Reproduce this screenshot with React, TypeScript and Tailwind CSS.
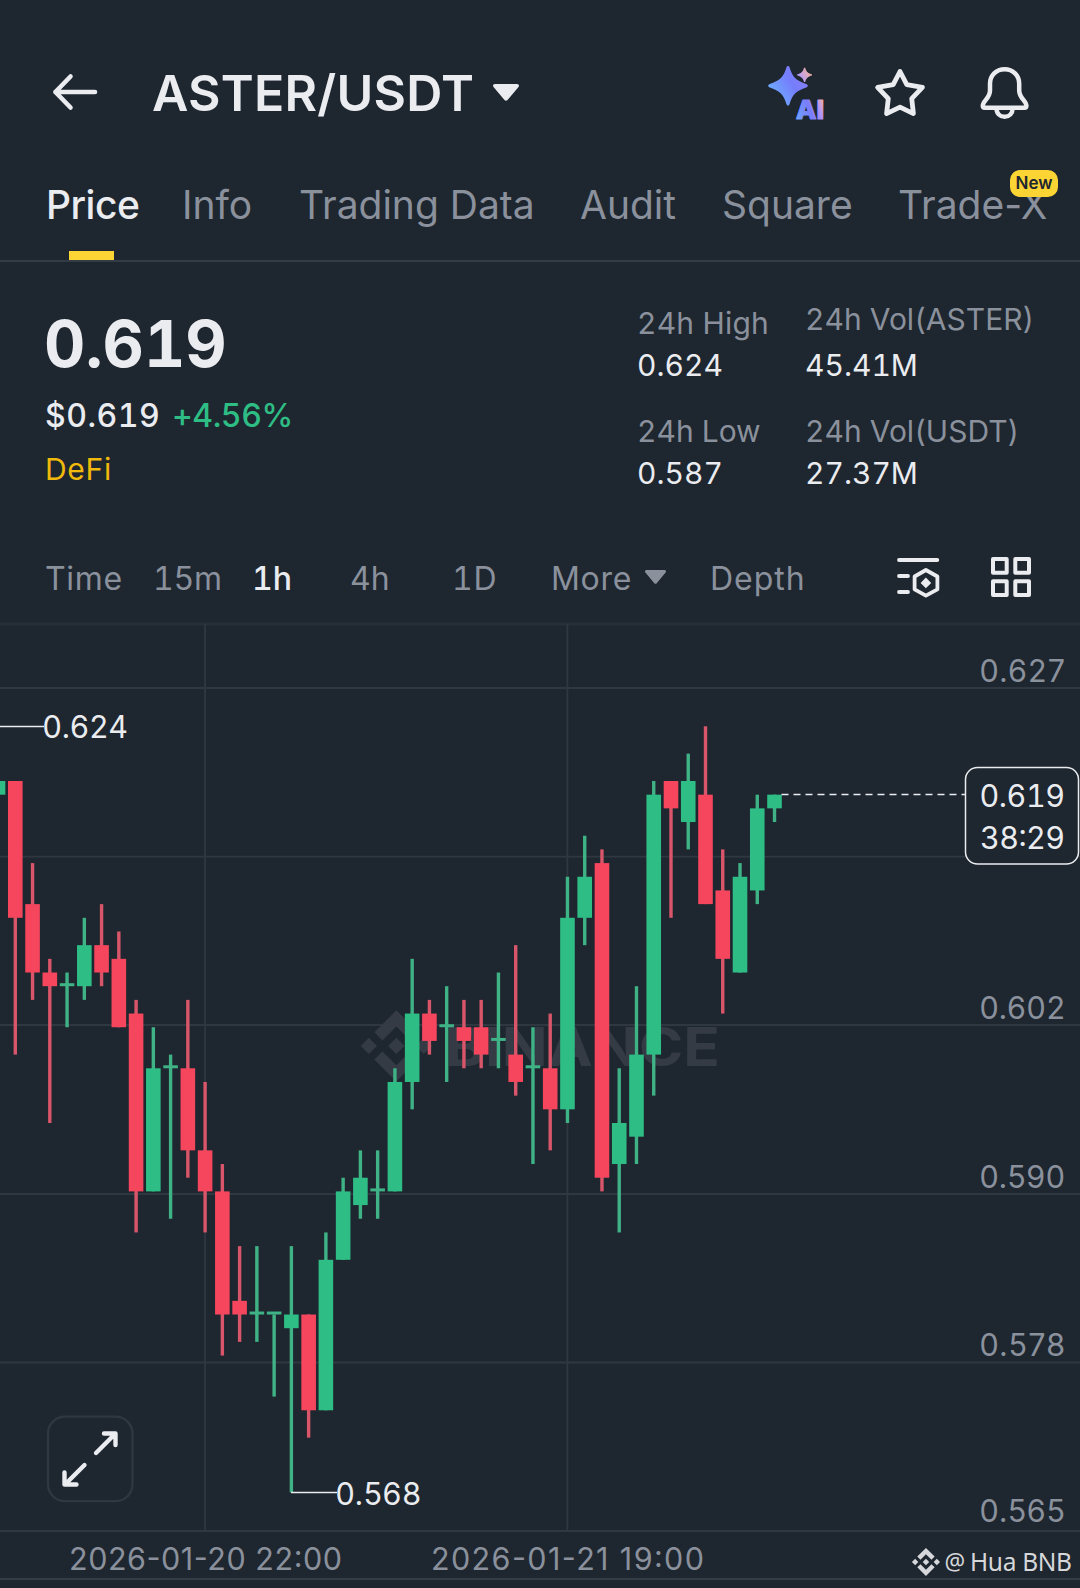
import clsx from "clsx";

type Candle = [up: 0 | 1, high: number, top: number, bottom: number, low: number];

// Levels are ticks (0.001) below 0.620
const CANDLES: Candle[] = [
    [1, 0, 0, 1, 1],
    [0, 0, 0, 10, 20],
    [0, 6, 9, 14, 16],
    [0, 13, 14, 15, 25],
    [1, 14, 15, 15, 18],
    [1, 10, 12, 15, 16],
    [0, 9, 12, 14, 15],
    [0, 11, 13, 18, 18],
    [0, 16, 17, 30, 33],
    [1, 18, 21, 30, 30],
    [1, 20, 21, 21, 32],
    [0, 16, 21, 27, 29],
    [0, 22, 27, 30, 33],
    [0, 28, 30, 39, 42],
    [0, 34, 38, 39, 41],
    [1, 34, 39, 39, 41],
    [1, 39, 39, 39, 45],
    [1, 34, 39, 40, 52],
    [0, 39, 39, 46, 48],
    [1, 33, 35, 46, 46],
    [1, 29, 30, 35, 35],
    [1, 27, 29, 31, 32],
    [1, 27, 30, 30, 32],
    [1, 21, 22, 30, 30],
    [1, 13, 17, 22, 24],
    [0, 16, 17, 19, 20],
    [1, 15, 18, 18, 22],
    [0, 16, 18, 19, 21],
    [0, 16, 18, 20, 21],
    [1, 14, 19, 19, 21],
    [0, 12, 20, 22, 23],
    [1, 18, 21, 21, 28],
    [0, 17, 21, 24, 27],
    [1, 7, 10, 24, 25],
    [1, 4, 7, 10, 12],
    [0, 5, 6, 29, 30],
    [1, 21, 25, 28, 33],
    [1, 15, 20, 26, 28],
    [1, 0, 1, 20, 23],
    [0, 0, 0, 2, 10],
    [1, -2, 0, 3, 5],
    [0, -4, 1, 9, 9],
    [0, 5, 8, 13, 17],
    [1, 6, 7, 14, 14],
    [1, 1, 2, 8, 9],
    [1, 1, 1, 2, 3],
];

const CHART_TOP = 622;
const tickY = (t: number) => 781 + t * 13.68;
const candleX = (i: number) => 15.3 + (i - 1) * 17.255;

const GRID_Y = [688, 856.7, 1025, 1194, 1362.5, 1531];
const GRID_X = [205, 567.4];

const AXIS = [
    { label: "0.627", y: 681.7 },
    { label: "0.602", y: 1018.7 },
    { label: "0.590", y: 1188 },
    { label: "0.578", y: 1356 },
    { label: "0.565", y: 1522 },
];

const TABS = ["Price", "Info", "Trading Data", "Audit", "Square", "Trade-X"];

function BackIcon() {
    return (
        <svg width="48" height="40" viewBox="51 72 48 40" fill="none" stroke="#eaecef" strokeWidth="4.6" strokeLinecap="round" strokeLinejoin="round">
            <path d="M95 92H55.4M70.500 76.500 55.400 92 70.500 107.500" />
        </svg>
    );
}

function AiIcon() {
    return (
        <svg className="overflow-visible" width="60" height="58" viewBox="766 64 60 58">
            <defs>
                <linearGradient id="spark" x1="0" y1="0.8" x2="1" y2="0.2">
                    <stop offset="0.15" stopColor="#6ea8ff" />
                    <stop offset="0.6" stopColor="#757dfb" />
                    <stop offset="1" stopColor="#8a80fa" />
                </linearGradient>
                <linearGradient id="mini" x1="0" y1="0.8" x2="1" y2="0.2">
                    <stop offset="0.2" stopColor="#b79cf5" />
                    <stop offset="0.9" stopColor="#f3b3a0" />
                </linearGradient>
                <linearGradient id="ai" x1="0" y1="0.7" x2="1" y2="0.3">
                    <stop offset="0" stopColor="#6ea0ff" />
                    <stop offset="0.5" stopColor="#7a7cfb" />
                    <stop offset="0.8" stopColor="#b596f4" />
                    <stop offset="1" stopColor="#efb0a8" />
                </linearGradient>
            </defs>
            <path
                fill="url(#spark)"
                d="M788 66c.9 0 1.300.6 1.600 1.500 3 9.500 5.500 12.200 16.500 16.500 1 .4 1.700.9 1.700 1.800s-.7 1.400-1.700 1.800c-11 4.300-13.500 7-16.500 16.500-.3.900-.7 1.500-1.600 1.500s-1.300-.6-1.600-1.500c-3-9.500-5.500-12.200-16.500-16.500-1-.4-1.700-.9-1.700-1.800s.7-1.400 1.700-1.800c11-4.300 13.500-7 16.500-16.500.3-.9.700-1.500 1.600-1.500Z"
            />
            <path fill="url(#mini)" stroke="url(#mini)" strokeWidth="1" strokeLinejoin="round" d="M804.600 67.800c1.800 4.600 2.800 5.500 7.200 7.100-4.400 1.600-5.400 2.600-7.200 7.100-1.800-4.500-2.800-5.500-7.200-7.100 4.400-1.600 5.400-2.500 7.200-7.100Z" />
            <text x="796" y="118.700" fontSize="25.500" fontWeight="800" textLength="28" lengthAdjust="spacingAndGlyphs" fill="url(#ai)" stroke="url(#ai)" strokeWidth="1.200" strokeLinejoin="round">
                AI
            </text>
        </svg>
    );
}

function StarIcon() {
    return (
        <svg width="56" height="56" viewBox="872 65 56 56" fill="none" stroke="#eaecef" strokeWidth="4.800" strokeLinejoin="round">
            <path d="M900 71.500 906.800 84.600 922.400 87.400 911.700 98.600 913.400 113.600 900 107.200 886.600 113.600 888.300 98.600 877.600 87.400 893.200 84.600Z" />
        </svg>
    );
}

function BellIcon() {
    return (
        <svg width="58" height="60" viewBox="976 62 58 60" fill="none" stroke="#eaecef" strokeWidth="4.500" strokeLinejoin="round">
            <path d="M1004.600 68.300c-8.400 0-14.600 6.200-14.600 14.400v6.800c0 3.600-1.200 5.800-4.200 9.400-1.800 2.200-3 3.700-3 5.800 0 1.200.8 2 2 2h39.600c1.200 0 2-.8 2-2 0-2.100-1.200-3.600-3-5.800-3-3.600-4.200-5.800-4.200-9.400v-6.800c0-8.200-6.200-14.400-14.600-14.400Z" />
            <path d="M996.600 107.500c0 5 3.400 8.300 8 8.300s8-3.300 8-8.300" />
        </svg>
    );
}

function IndicatorIcon() {
    return (
        <svg width="44" height="42" viewBox="896 557 44 42" fill="none" stroke="#eaecef" strokeWidth="3.800" strokeLinecap="round" strokeLinejoin="round">
            <path d="M899 561h38.300M899 577h9M899 593h9" />
            <path d="M925.900 571 937.400 577.500V590.300L925.900 596.600 914.600 590.300V577.500Z" strokeWidth="3.800" />
            <path d="M925.900 578.600 931.200 583.900 925.900 589.200 920.600 583.900Z" fill="#eaecef" stroke="none" />
        </svg>
    );
}

function GridIcon() {
    return (
        <svg width="42" height="42" viewBox="990 556 42 42" fill="none" stroke="#eaecef" strokeWidth="4" strokeLinejoin="round">
            <path d="M993 559h13.700v13.700H993ZM1015.300 559H1029v13.700h-13.700ZM993 581.300h13.700V595H993ZM1015.300 581.300H1029V595h-13.700Z" />
        </svg>
    );
}

function Caret({ className }: { className: string }) {
    return (
        <svg className={className} viewBox="0 0 26 17" preserveAspectRatio="none" fill="currentColor">
            <path d="M2 0h22c1.800 0 2.600 1.700 1.500 3L14.500 16c-.8 1-2.200 1-3 0L.5 3C-.6 1.700.2 0 2 0Z" />
        </svg>
    );
}

// Diamond logo on a 126x126 box
const LOGO =
    "M38.200 53.200 62.900 28.500l24.700 24.700L102 38.800 62.900-.3 23.800 38.800ZM-.3 63 14 48.600 28.400 63 14 77.400ZM38.200 72.800 62.900 97.500l24.700-24.700L102 87.200 62.900 126.300 23.800 87.200ZM97.400 63l14.400-14.400L126.200 63l-14.400 14.400ZM77.500 63 62.900 48.400 48.300 63l14.600 14.600Z";

function Header() {
    return (
        <header className="h-[149px] pt-[35px] pl-[51px] pr-[46px] flex items-center">
            <BackIcon />
            <h1 className="ml-[53px] w-[323px] pt-[2px] whitespace-nowrap text-[50px] font-[620] tracking-[0.2px]">ASTER/USDT</h1>
            <Caret className="w-[26px] h-[17px] ml-[18px]" />
            <div className="ml-auto pt-px flex items-center">
                <AiIcon />
                <div className="ml-[46px]"><StarIcon /></div>
                <div className="ml-12"><BellIcon /></div>
            </div>
        </header>
    );
}

function Tabs() {
    return (
        <nav className="h-[113px] pl-[46px] border-b-2 border-[#333b45] grid grid-cols-[136px_117px_281px_142px_176px_1fr] text-[39px] font-[430] text-[#8a919c]">
            {TABS.map((tab, i) => (
                <div key={tab} className="relative flex items-center">
                    <span className={clsx("pt-[2px] whitespace-nowrap", i === 0 && "text-[#eaecef] font-[480] tracking-[-0.5px]")}>{tab}</span>
                    {i === 0 && <span className="absolute left-[23px] bottom-0 w-[45px] h-[9px] bg-[#fcd535]" />}
                    {tab === "Trade-X" && (
                        <span className="absolute left-[112px] top-[21px] w-12 h-[27px] rounded-[10px] bg-[#fcd535] text-[#202630] text-[17px] font-semibold flex items-center justify-center">
                            New
                        </span>
                    )}
                </div>
            ))}
        </nav>
    );
}

function Stats() {
    return (
        <section className="h-[271px] pt-10 pl-[45px] flex">
            <div className="w-[592px] pt-px">
                <div className="h-20 leading-[82px] -ml-px text-[64px] font-[650] tabular-nums">0.619</div>
                <div className="mt-2 h-[50px] leading-[50px] text-[32px] font-medium tabular-nums flex">
                    <span className="w-[127px] tracking-[0.5px]">$0.619</span>
                    <span className="text-[#2ebd85] tracking-[-0.4px]">+4.56%</span>
                </div>
                <div className="mt-2 h-10 leading-10 text-[30px] tracking-[0.7px] text-[#f0b90b]">DeFi</div>
            </div>
            <div className="w-[168px] text-[30px] tabular-nums">
                <div className="h-[43px] leading-[43px] tracking-[0.2px] text-[#8a919c]">24h High</div>
                <div className="h-11 leading-10">0.624</div>
                <div className="mt-[21px] h-[43px] leading-[43px] text-[#8a919c]">24h Low</div>
                <div className="h-[42px] leading-10">0.587</div>
            </div>
            <div className="text-[30px] tabular-nums">
                <div className="h-9 mb-[7px] leading-[34px] text-[#8a919c]">24h Vol(ASTER)</div>
                <div className="h-11 leading-10">45.41M</div>
                <div className="mt-[21px] h-[43px] leading-[43px] text-[#8a919c]">24h Vol(USDT)</div>
                <div className="h-[42px] leading-10">27.37M</div>
            </div>
        </section>
    );
}

function Intervals() {
    return (
        <div className="h-[89px] pl-[45px] grid grid-cols-[108px_99px_98px_102px_99px_157px_188px_94px_1fr] items-center text-[32px] tracking-[0.7px] tabular-nums text-[#8a919c]">
            <span className="pt-[2px]">Time</span>
            <span className="pt-[2px] tracking-[-0.3px]">15m</span>
            <span className="pt-[2px] text-[#eaecef] font-medium tracking-normal">1h</span>
            <span className="pt-[2px] tracking-normal">4h</span>
            <span className="pt-[2px]">1D</span>
            <span className="pt-[2px] flex items-center">
                More
                <Caret className="w-[21px] h-[14px] ml-[13px] mb-1" />
            </span>
            <span className="pt-[2px] pl-0.5 tracking-[1px]">Depth</span>
            <div className="pb-px"><IndicatorIcon /></div>
            <div className="pb-px"><GridIcon /></div>
        </div>
    );
}

function Chart() {
    return (
        <svg className="block" width="1080" height="966" viewBox={`0 ${CHART_TOP} 1080 966`}>
            <g stroke="#2f3740" strokeWidth="1.800">
                <path d="M0 624H1080" stroke="#272f38" strokeWidth="3" />
                {GRID_Y.map((y) => <path key={y} d={`M0 ${y}H1080`} />)}
                {GRID_X.map((x) => <path key={x} d={`M${x} 624V1531`} />)}
                <path d="M0 1579H1080" stroke="#333b45" strokeWidth="2" />
            </g>

            <g fill="#343b45">
                <path transform="translate(361 1010.500) scale(0.562)" d={LOGO} />
                <text x="445" y="1066.300" fontSize="54" fontWeight="700" textLength="275" lengthAdjust="spacingAndGlyphs">BINANCE</text>
            </g>

            {CANDLES.map(([up, high, top, bottom, low], i) => {
                const x = candleX(i);
                const flat = top === bottom;
                const wick = up ? "#3fb286" : "#d9566a";
                const body = up ? "#2ebd85" : "#f6465d";
                return (
                    <g key={i}>
                        <rect x={x - 1.7} y={tickY(high)} width="3.400" height={tickY(low) - tickY(high)} fill={wick} />
                        <rect
                            x={x - 7.3}
                            y={flat ? tickY(top) - 3 : tickY(top)}
                            width="14.600"
                            height={flat ? 3 : tickY(bottom) - tickY(top)}
                            fill={flat ? wick : body}
                        />
                    </g>
                );
            })}

            {/* High / low markers */}
            <g stroke="#eaecef" strokeWidth="1.500">
                <path d="M0 726.500H44M291 1492.500H337" />
                <path d="M781.500 794.500H965" strokeDasharray="7 5" />
            </g>
            <g fill="#eaecef" fontSize="30.500">
                <text x="42.500" y="738" textLength="85.500">0.624</text>
                <text x="335.500" y="1504.500" textLength="85.500">0.568</text>
            </g>

            <g fill="#8a919c" fontSize="30.500">
                {AXIS.map((a) => <text key={a.label} x="979.500" y={a.y} textLength="85.500">{a.label}</text>)}
                <text x="69" y="1569.700" textLength="273">2026-01-20 22:00</text>
                <text x="431" y="1569.700" textLength="273">2026-01-21 19:00</text>
            </g>

            {/* Current price tag */}
            <rect x="965.500" y="767.500" width="113" height="96.500" rx="12" fill="#1e262f" stroke="#eaecef" strokeWidth="1.500" />
            <g fill="#eaecef" fontSize="30.500" className="tabular-nums">
                <text x="979.500" y="806.500" textLength="85.500">0.619</text>
                <text x="980" y="849" textLength="85">38:29</text>
            </g>

            {/* Fullscreen button */}
            <rect x="48" y="1416.700" width="84.500" height="84.500" rx="17" fill="#1e262f" stroke="#2f3740" strokeWidth="2.300" />
            <path
                d="M96 1453 115 1434M104 1433.500H115.500V1445M84.500 1465 65.500 1484M64.500 1472.500V1484.500H76.500"
                fill="none"
                stroke="#eaecef"
                strokeWidth="4.400"
                strokeLinecap="round"
                strokeLinejoin="round"
            />

            {/* Author credit */}
            <g fill="#d5d7da">
                <path transform="translate(912 1548) scale(0.222)" d={LOGO} />
                <g className="font-['Noto_Sans',sans-serif]" fontSize="24.500">
                    <text x="944.500" y="1570" fontSize="23">@</text>
                    <text x="970" y="1570.500" textLength="102">Hua BNB</text>
                </g>
            </g>
        </svg>
    );
}

export default function App() {
    return (
        <div className="w-[1080px] h-[1588px] overflow-hidden bg-[#1e262f] text-[#eaecef] font-[Inter,sans-serif]">
            <Header />
            <Tabs />
            <Stats />
            <Intervals />
            <Chart />
        </div>
    );
}
